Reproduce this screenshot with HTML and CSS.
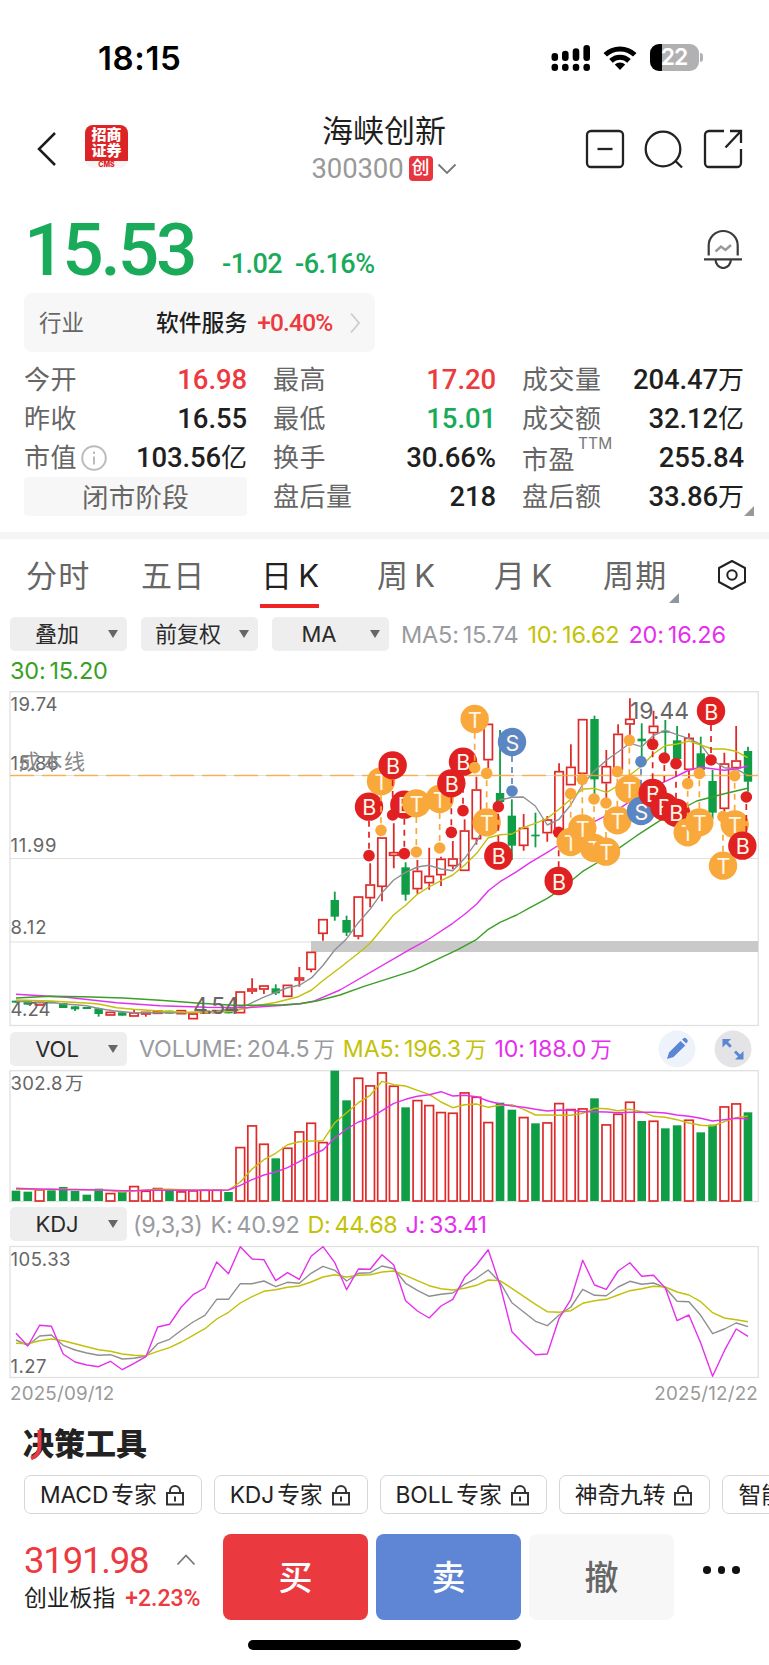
FILE: index.html
```html
<!DOCTYPE html>
<html lang="zh-CN">
<head>
<meta charset="utf-8">
<title>海峡创新 300300</title>
<link rel="stylesheet" href="styles.css">
</head>
<body>
<header class="status">
  <span class="clock">18:15</span>
  <span class="status-icons">
    <svg class="signal" width="40" height="28" viewBox="0 0 40 28"><g stroke="#000" stroke-width="6.6" stroke-linecap="round"><path d="M3.8 12.3v1.4M14.3 10v3.7M25 7.500v6.200M35.700 4.300v9.400M3.800 23v.8M14.300 23v.8M25 23v.8M35.700 23v.8"/></g></svg>
    <svg class="wifi" width="34" height="26" viewBox="0 0 34 26"><g fill="none" stroke="#000" stroke-width="5"><path d="M2.200 9.800a21.500 21.500 0 0 1 29.600 0"/><path d="M8 15.900a13 13 0 0 1 18 0"/></g><path d="M17 25l-5.200-5.400a7.800 7.800 0 0 1 10.400 0z"/></svg>
    <span class="battery"><b>22</b></span><i class="nub"></i>
  </span>
</header>

<nav class="nav">
  <div class="nav-left">
    <svg width="20" height="36" viewBox="0 0 20 36"><path d="M18 2L2 18l16 16" fill="none" stroke="#1c1c1c" stroke-width="2.500"/></svg>
    <div class="logo"><span>招商</span><span>证券</span><em>CMS</em></div>
  </div>
  <div class="nav-title">
    <h1>海峡创新</h1>
    <div class="code"><span>300300</span><b>创</b><svg width="20" height="12" viewBox="0 0 20 12"><path d="M1.500 1.500l8.500 8.500 8.500-8.500" fill="none" stroke="#777" stroke-width="1.800"/></svg></div>
  </div>
  <div class="nav-right">
    <svg width="40" height="40" viewBox="0 0 40 40"><rect x="2" y="2" width="36" height="36" rx="4"/><path d="M12.500 20h15"/></svg>
    <svg width="40" height="40" viewBox="0 0 40 40"><circle cx="19" cy="20" r="17.300"/><path d="M31 31.500l7 7"/></svg>
    <svg width="40" height="40" viewBox="0 0 40 40"><path d="M21 2H6a4 4 0 0 0-4 4v28a4 4 0 0 0 4 4h28a4 4 0 0 0 4-4V20M27 2h11v12M38 2L22.500 18.500"/></svg>
  </div>
</nav>

<section class="quote">
  <div class="price-row">
    <span class="price">15.53</span><span class="chg">-1.02</span><span class="chg pct">-6.16%</span>
    <svg class="bell" width="40" height="40" viewBox="0 0 40 40"><path d="M5.700 26.500V16.500a14.500 14.500 0 0 1 29 0v10M1 30.300h38M12.500 30.500a7.700 8.500 0 0 0 15.400 0" fill="none" stroke="#3c3c3c" stroke-width="2.200"/><path d="M12.500 22.500l5.500-5 4.500 3.500 5.500-5" fill="none" stroke="#999" stroke-width="2.400"/></svg>
  </div>
  <div class="industry"><span class="k">行业</span><span class="n">软件服务</span><span class="p">+0.40%</span>
    <svg width="12" height="22" viewBox="0 0 12 22"><path d="M2 1.500l8 9.500-8 9.500" fill="none" stroke="#ccc" stroke-width="1.800"/></svg></div>
  <div class="stats">
    <div><label>今开</label><b class="up">16.98</b></div>
    <div><label>最高</label><b class="up">17.20</b></div>
    <div><label>成交量</label><b>204.47<i>万</i></b></div>
    <div><label>昨收</label><b>16.55</b></div>
    <div><label>最低</label><b class="down">15.01</b></div>
    <div><label>成交额</label><b>32.12<i>亿</i></b></div>
    <div><label>市值</label><svg class="info" width="26" height="26" viewBox="0 0 26 26"><circle cx="13" cy="13" r="11.800" fill="none" stroke="#bbb" stroke-width="2"/><path d="M13 11.500v8M13 6.500v2.500" stroke="#bbb" stroke-width="2"/></svg><b>103.56<i>亿</i></b></div>
    <div><label>换手</label><b>30.66%</b></div>
    <div><label class="pe">市盈</label><sup>TTM</sup><b>255.84</b></div>
    <div class="phase">闭市阶段</div>
    <div><label>盘后量</label><b>218</b></div>
    <div class="last"><label>盘后额</label><b>33.86<i>万</i></b></div>
  </div>
</section>

<div class="tabs">
  <span class="t1">分时</span><span class="t2">五日</span><span class="t3 on">日<i>K</i></span><span class="t4">周<i>K</i></span><span class="t5">月<i>K</i></span><span class="t6">周期</span>
  <svg class="hex" width="30" height="32" viewBox="0 0 30 32"><path d="M15 2l13 7v14l-13 7-13-7V9z" fill="none" stroke="#222" stroke-width="2" stroke-linejoin="round"/><circle cx="15" cy="16" r="4.700" fill="none" stroke="#222" stroke-width="2"/></svg>
</div>

<div class="tools">
  <button><span>叠加</span></button><button><span>前复权</span></button><button><span>MA</span></button>
  <div class="legend ma"><span class="grey">MA5:<s></s>15.74</span><span class="yellow">10:<s></s>16.62</span><span class="pink">20:<s></s>16.26</span></div>
</div>
<div class="legend second"><span class="green">30:<s></s>15.20</span></div>

<svg id="kline" class="chart" width="769" height="338" viewBox="0 690 769 338"></svg>

<div class="tools vol">
  <button><span>VOL</span></button>
  <div class="legend"><span class="grey">VOLUME:<s></s>204.5<s></s><u>万</u></span><span class="yellow">MA5:<s></s>196.3<s></s><u>万</u></span><span class="pink">10:<s></s>188.0<s></s><u>万</u></span></div>
  <div class="round-btns">
    <svg width="38" height="38" viewBox="0 0 38 38"><circle cx="19" cy="19" r="18.500" fill="#edf2fb"/><path d="M9 29l2-6.500L22.500 11l4.800 4.600L15.500 27zM24 9.500l2-1.500q1-.7 2 .3l1.300 1.400q1 1 .2 2l-1.300 1.900z" fill="#5b86d4"/></svg>
    <svg width="38" height="38" viewBox="0 0 38 38"><circle cx="19" cy="19" r="18.500" fill="#e4e4e6"/><path d="M8.500 9h8.500l-3 3 3.800 3.800-2 2L12 14l-3.500 3.500zM29.500 29.500H21l3-3-4-4 2-2 4 4 3.500-3.500z" fill="#5b86d4"/></svg>
  </div>
</div>

<svg id="volume" class="chart" width="769" height="134" viewBox="0 1069 769 134"></svg>

<div class="tools kdj">
  <button><span>KDJ</span></button>
  <div class="legend"><span class="grey">(9,3,3)</span><span class="grey">K:<s></s>40.92</span><span class="yellow">D:<s></s>44.68</span><span class="pink">J:<s></s>33.41</span></div>
</div>

<svg id="kdjchart" class="chart" width="769" height="134" viewBox="0 1245 769 134"></svg>
<div class="dates"><span>2025/09/12</span><span>2025/12/22</span></div>

<section class="decision">
  <h2>决策工具<svg width="16" height="32" viewBox="0 0 16 32"><path d="M12.500 1v17q0 8-8.500 11.500" fill="none" stroke="#ea3a40" stroke-width="4"/></svg></h2>
  <div class="chips" id="chips">
    <span class="chip">MACD<s></s>专家<svg class="lock" width="20" height="22" viewBox="0 0 20 22"><path d="M2 9h16v11.500H2zM5 9V7a5 5 0 0 1 10 0v2M10 12.500v5" /></svg></span>
    <span class="chip">KDJ<s></s>专家<svg class="lock" width="20" height="22" viewBox="0 0 20 22"><path d="M2 9h16v11.500H2zM5 9V7a5 5 0 0 1 10 0v2M10 12.500v5" /></svg></span>
    <span class="chip">BOLL<s></s>专家<svg class="lock" width="20" height="22" viewBox="0 0 20 22"><path d="M2 9h16v11.500H2zM5 9V7a5 5 0 0 1 10 0v2M10 12.500v5" /></svg></span>
    <span class="chip">神奇九转<svg class="lock" width="20" height="22" viewBox="0 0 20 22"><path d="M2 9h16v11.500H2zM5 9V7a5 5 0 0 1 10 0v2M10 12.500v5" /></svg></span>
    <span class="chip">智能</span>
  </div>
</section>

<footer class="trade">
  <div class="index">
    <div class="index-top"><b>3191.98</b><svg width="20" height="12" viewBox="0 0 20 12"><path d="M1.500 10.500L10 1.500l8.500 9" fill="none" stroke="#777" stroke-width="1.800"/></svg></div>
    <div class="index-sub"><span>创业板指</span><em>+2.23%</em></div>
  </div>
  <div class="act buy">买</div><div class="act sell">卖</div><div class="act cancel">撤</div>
  <div class="dots"><i></i><i></i><i></i></div>
</footer>
<div class="home"></div>
<script src="charts.js"></script>
</body>
</html>
```
FILE: styles.css
```css
* { box-sizing: border-box; }
body { margin: 0; width: 769px; height: 1665px; overflow: hidden; background: #fff; color: #1f1f1f; font-family: Inter, "Noto Sans CJK SC", sans-serif; }
i, em { font-style: normal; }
svg { display: block; flex: none; }

.status { height: 105px; padding: 37px 66px 0 98px; display: flex; justify-content: space-between; }
.clock { font: 600 33px/42px Inter, sans-serif; letter-spacing: 0.600px; color: #000; }
.status-icons { display: flex; align-items: center; height: 41px; }
.wifi { margin-left: 12px; }
.battery { margin-left: 13px; width: 49px; height: 27px; border-radius: 9px; background: linear-gradient(90deg, #000 12px, #b1b1b3 12px); color: #fff; text-align: center; }
.battery b { display: block; font: 600 23px/27px Inter, sans-serif; padding-right: 1px; letter-spacing: -1px; }
.nub { width: 3px; height: 9px; margin-left: 1px; border-radius: 0 4px 4px 0; background: #b1b1b3; }

.nav { height: 95px; padding: 0 26px 0 37px; display: grid; grid-template-columns: 1fr auto 1fr; }
.nav-left { display: flex; gap: 28px; padding-top: 20px; }
.nav-left > svg { margin-top: 6px; }
.logo { width: 43px; height: 43px; border-radius: 8px; background: linear-gradient(#dc2326 36px, #f7f4f4 36px); color: #fff; display: flex; flex-direction: column; align-items: center; font: 900 15px/16px Inter, "Noto Sans CJK SC", sans-serif; padding-top: 2px; }
.logo em { font: 800 7px/9px Inter, sans-serif; color: #dc2326; margin-top: 1px; }
.nav-title { text-align: center; transform: translateX(-6px); }
.nav-title h1 { margin: 6px 0 0; font: 400 31px/40px Inter, "Noto Sans CJK SC", sans-serif; }
.code { height: 35px; display: flex; align-items: center; justify-content: center; color: #999; }
.code span { font: 400 27.500px/34px Roboto, sans-serif; letter-spacing: -0.100px; }
.code b { width: 24px; height: 25px; margin: 0 4px 0 5px; border-radius: 4px; background: #e8353f; color: #fff; font: 500 18px/24px Inter, "Noto Sans CJK SC", sans-serif; }
.nav-right { display: flex; justify-content: flex-end; gap: 19px; padding-top: 24px; }
.nav-right svg { fill: none; stroke: #222; stroke-width: 2.300; }

.quote { height: 332px; padding: 0 25px 0 24px; }
.price-row { height: 93px; display: flex; color: #19ab5a; font-family: Roboto, sans-serif; font-weight: 500; }
.price { width: 198px; font-size: 73px; line-height: 101px; letter-spacing: -3.200px; }
.chg { width: 73px; font-size: 27px; line-height: 129px; letter-spacing: -0.500px; }
.price-row .pct { width: 90px; letter-spacing: -0.500px; }
.bell { margin: 29px 1px 0 auto; }
.industry { width: 351px; height: 59px; padding: 0 14px 0 15px; display: flex; align-items: center; border-radius: 8px; background: #f7f7f7; font-size: 22.500px; line-height: 60px; }
.industry .k { width: 117px; color: #666; }
.industry .n { font-size: 22.800px; font-weight: 500; }
.industry .p { margin-left: 10px; font: 500 24.500px/59px Roboto, sans-serif; letter-spacing: -0.800px; color: #ec3a40; }
.industry svg { margin-left: auto; }
.stats { margin-top: 8px; display: grid; grid-template-columns: 223px 223px 222px; column-gap: 26px; grid-auto-rows: 39px; }
.stats > div { display: flex; line-height: 40px; }
.stats label { font-size: 26px; letter-spacing: 0.500px; color: #666; }
.stats b { margin-left: auto; font: 500 27.500px/40px Roboto, "Noto Sans CJK SC", sans-serif; letter-spacing: -0.100px; }
.stats b i { font-size: 26px; font-weight: 400; }
.stats .info { margin: 7px 0 0 4px; }
.stats .pe { padding-top: 2px; }
.stats sup { align-self: flex-start; margin-top: -3px; padding-left: 3px; font-size: 15.500px; line-height: 17px; letter-spacing: 0.100px; color: #777; }
.stats .phase { justify-content: center; font-size: 26.500px; letter-spacing: 0.300px; border-radius: 4px; background: #f7f7f7; color: #666; }
.up { color: #ec3a40; }
.down { color: #19ab5a; }
.stats .last { position: relative; }
.last::after { content: ""; position: absolute; right: -10px; bottom: 0; border: 5px solid #999; border-top-color: transparent; border-left-color: transparent; }

.tabs { height: 85px; border-top: 7px solid #f5f5f5; padding: 8px 22px 0 26px; display: flex; font-size: 31px; line-height: 58px; letter-spacing: 1.200px; color: #666; }
.tabs i { margin-left: 5px; }
.tabs .t1 { width: 115px; }
.tabs .t2 { width: 120px; }
.tabs .t3 { width: 116px; }
.tabs .t4 { width: 117px; }
.tabs .t5 { width: 109px; }
.tabs .on { position: relative; color: #222; }
.on::after { content: ""; position: absolute; left: -1px; top: 57px; width: 59px; height: 4px; background: #ef2424; }
.tabs .t6 { position: relative; }
.t6::after { content: ""; position: absolute; right: -12px; top: 46px; border: 5px solid #8f959e; border-top-color: transparent; border-left-color: transparent; }
.hex { margin: 12px 0 0 auto; }

.tools { height: 34px; padding-left: 10px; display: flex; align-items: center; }
button { width: 117px; height: 34px; margin: 0 14px 0 0; padding: 0; border: 0; border-radius: 5px; background: #eee; display: flex; align-items: center; font: 400 22px/34px Inter, "Noto Sans CJK SC", sans-serif; color: #2a2a2a; }
button span { width: 94px; flex: none; text-align: center; white-space: nowrap; }
button::after { content: ""; flex: none; box-sizing: content-box; margin-left: 4px; border: 5.500px solid transparent; border-top: 8px solid #666; border-bottom: 0; }
.legend { display: flex; gap: 9px; font-size: 23.500px; line-height: 35px; letter-spacing: -0.200px; white-space: nowrap; }
.legend s { display: inline-block; width: 4px; }
.legend u { text-decoration: none; font-size: 21.500px; }
.legend.ma { margin-left: -2px; }
.second { height: 39px; padding: 2px 0 0 10px; }
.grey { color: #999b9f; }
.yellow { color: #c4c207; }
.pink { color: #e430ee; }
.green { color: #3a9f24; }
.vol { height: 41px; }
.vol .legend { margin-left: -2px; font-size: 23.200px; letter-spacing: -0.150px; gap: 8px; line-height: 36px; }
.kdj .legend { margin-left: -8px; font-size: 23.400px; gap: 8px; letter-spacing: -0.300px; }
.round-btns { margin-left: auto; padding-right: 17px; display: flex; gap: 18px; }
.kdj { height: 42px; }
.chart text { font-family: Inter, "Noto Sans CJK SC", sans-serif; }
.dates { height: 38px; padding: 0 11px 0 10px; display: flex; justify-content: space-between; font-size: 18.800px; line-height: 30px; letter-spacing: 0.200px; color: #999; }

.decision { height: 99px; padding-left: 23px; }
.decision h2 { position: relative; margin: 0; height: 58px; font: 900 31px/54px Inter, "Noto Sans CJK SC", sans-serif; color: #222; }
.decision h2 svg { position: absolute; left: 4px; top: 12px; }
.chips { display: flex; gap: 12px; width: 746px; overflow: hidden; padding-left: 1px; }
.chip { height: 39px; flex: none; padding: 0 16px 0 15px; border: 1.500px solid #d6d6d6; border-radius: 7px; display: flex; align-items: center; font-size: 22.800px; line-height: 37px; letter-spacing: -0.100px; color: #222; }
.chip s { width: 3px; }
.lock { margin-left: 8px; fill: none; stroke: #333; stroke-width: 2; }

.trade { height: 126px; padding: 18px 0 0 24px; display: flex; gap: 8px; }
.index { width: 191px; }
.index-top { height: 54px; display: flex; align-items: center; }
.index-top b { width: 152px; font: 400 36.500px/56px Roboto, sans-serif; letter-spacing: -1.200px; color: #ec3a40; }
.index-top svg { margin-top: -3px; }
.index-sub { font-size: 22.800px; line-height: 19px; white-space: nowrap; }
.index-sub em { margin-left: 10px; font: 500 23px/19px Roboto, sans-serif; color: #ec3a40; }
.act { width: 145px; height: 86px; border-radius: 8px; text-align: center; color: #fff; font: 500 34px/88px Inter, "Noto Sans CJK SC", sans-serif; }
.buy { background: #ea3a40; }
.sell { background: #5f86d4; }
.cancel { background: #f7f7f7; color: #666; }
.dots { display: flex; gap: 7px; padding: 32px 0 0 21px; }
.dots i { width: 7.500px; height: 7.500px; border-radius: 50%; background: #111; }
.home { width: 273px; height: 10px; margin: -2px 0 0 248px; border-radius: 5px; background: #000; }
```
FILE: charts.js
```js
const RED = '#df2a2a', GREEN = '#0f9d46', GRID = '#e0e0e0';
const LINE = { grey: '#8f8f92', yellow: '#c2c00a', pink: '#e430ee', green: '#3a9f24' };
const cx = i => 16 + 11.806 * i;

const rect = (x, y, w, h, a) => `<rect x="${x}" y="${y}" width="${w}" height="${h}" ${a}/>`;
const hline = y => `<path d="M10 ${y}H758" stroke="${GRID}" stroke-width="1.2"/>`;
const poly = (pts, c) => `<polyline points="${pts}" fill="none" stroke="${c}" stroke-width="1.4" stroke-linejoin="round"/>`;
const label = (s, x, y, size, w, c = '#666') => `<text x="${x}" y="${y}" font-size="${size}" fill="${c}" textLength="${w}">${s}</text>`;
const frame = (y, h) => rect(10, y, 748.3, h, `fill="none" stroke="${GRID}" stroke-width="1.3"`);

// Each candle: [colour, body top, body bottom, high, low], vertical thirds of a pixel from y=690
const candles = [
  ['G',932,938],['G',934,944],['R',935,947],['G',934,940],['G',939,954],['G',949,958,949,963],['G',951,957],['G',955,972,953,980],
  ['R',965,977],['G',967,977],['R',967,980,960],['R',965,974,965,980],['R',961,972],['G',962,971],['R',960,973],['R',970,988],
  ['R',962,970],['R',960,970],['G',961,970],['R',904,970],['R',895,905,865,912],['R',886,899,886,912],['G',895,910,883,915],
  ['R',884,921],['R',862,872,831,890],['R',785,840,785,847],['R',687,732,687,752],['G',630,680,605,692],
  ['G',690,728,677,738],['R',619,740,619,748],['R',583,625,520,652],['R',442,591,442,634],['R',486,498,400,535],['G',532,614,517,632],
  ['R',542,598,510,611],['R',557,580,473,599],['R',506,556,500,588],['R',505,529,453,538],['R',421,543,388],['R',298,448,260,464],
  ['R',101,211,101,235],['G',309,336,120],['G',377,467,328,510],['R',413,468,372,482],['G',434,439,368,472],
  ['R',388,430,378,455],['R',243,437,220],['R',230,286,163],['R',87,252],['G',87,268,77,330],['R',228,280,180,330],['R',131,240,103],
  ['R',86,104,25,150],['G',146,154,100,215],['R',107,130,62,160],['G',122,128,90,200],['G',151,207,108,235],['R',143,240,130,280],
  ['G',190,240,140],['G',273,368,240,388],['R',220,357,188,385],['R',211,235,108],['G',183,275,170,305]
];

function drawCandle([c, t, b, hi = t, lo = b], i) {
  const y = v => 690 + v / 3, x = cx(i);
  if (c === 'G') return `<path d="M${x} ${y(hi)}V${y(lo)}" stroke="${GREEN}" stroke-width="1.8"/>` + rect(x - 4.2, y(t), 8.4, y(b) - y(t), `fill="${GREEN}"`);
  return `<path d="M${x} ${y(hi)}V${y(t)}M${x} ${y(b)}V${y(lo)}" stroke="${RED}" stroke-width="1.8"/>` +
    rect(x - 4.2, y(t) + .7, 8.4, Math.max(1.5, y(b) - y(t) - 1.4), `fill="none" stroke="${RED}" stroke-width="1.7"`);
}

// Sections of a moving average, each with its own origin
const join = (...parts) => parts.map(([ox, oy, s]) => s.split(' ').map(p => {
  const [x, y] = p.split(',').map(Number); return (ox + x / 3).toFixed(1) + ',' + (oy + y / 3).toFixed(1);
}).join(' ')).join(' ');
const averages = {
  grey: [[0,870,'48,393 83,396 118,398 153,397 190,402 225,404 260,407 300,416 340,422 400,428 480,428 560,428 650,424 700,415 740,406 790,382 860,354 900,345 935,323 970,285 1004,240'],
    [300,690,'140,746 175,698 210,658 246,608 281,570 317,547 352,531 387,526 423,537 458,542 494,505 530,455 565,380 600,330 636,322 670,321'],
    [530,690,'0,336 16,348 52,405 87,388 122,345 157,285 193,243 230,210 265,185 300,160 335,170 370,137 405,121 441,134 477,146 512,163 547,210 583,233 618,236 653,257']],
  yellow: [[0,870,'48,390 150,393 270,400 300,403 350,413 400,418 480,423 560,427 640,427 700,424 750,411 830,397 895,380 935,360 970,331 1020,293'],
    [300,690,'190,778 210,760 246,717 281,674 317,646 352,613 387,591 423,572 458,555 494,525 530,490 565,443 600,434 636,432 670,413'],
    [530,690,'16,400 52,385 87,358 122,328 157,298 193,295 230,307 265,287 300,255 335,228 370,192 405,167 441,162 477,153 512,165 547,177 583,177 618,184 653,203']],
  pink: [[0,870,'48,373 200,382 350,398 480,407 620,412 740,413 850,406 900,401 940,394 1020,360'],
    [300,690,'330,778 387,747 458,700 494,673 530,642 565,602 600,575 650,545'],
    [530,690,'0,518 52,487 87,465 193,395 265,358 335,310 400,277 441,258 477,240 512,232 547,236 583,241 618,237 653,228']],
  green: [[0,870,'48,384 150,379 250,380 370,384 480,391 600,400 700,406 760,406 850,404 900,401 950,393 1020,375 1090,350 1240,302'],
    [300,690,'475,778 530,748 565,718 600,697 650,675'],
    [530,690,'0,653 52,625 87,602 157,545 215,510 265,476 320,437 400,385 440,365 500,333 583,311 653,295']]
};

// Trade marks: [letter, origin x, x and y of badge, y of dot, x of dot if shifted]
const A = 300, B = 530;
const marks = [
  ['B',A,207,350,497],['T',A,243,274,421],['B',A,278,226,375],['B',A,313,344,491],['T',A,349,340,486],['T',A,419,327,474],
  ['B',A,454,280,427],['B',A,489,215,362],['T',A,524,87,233],['T',A,560,397,250],['B',A,595,497,350],['S',A,636,156,303],
  ['B',B,86,573,427],['T',B,122,456,311],['T',B,157,415,268],['T',B,192,474,327],['T',B,228,485,339],['T',B,262,391,245],
  ['T',B,298,298,151],['S',B,333,363,215],['B',B,368,309,163],['B',B,403,350,204],['B',B,438,368,221],['T',B,473,427,281],
  ['T',B,508,397,250],['B',B,543,63,210],['T',B,579,527,380],['T',B,614,403,257],['B',B,637,467,321,649]
];
const markColor = { B: '#e02021', T: '#f9a93c', S: '#5b86c4' };
function drawMark([s, ox, bx, by, dy, dx = bx]) {
  const x = ox + bx / 3, y = 690 + by / 3, x2 = ox + dx / 3, y2 = 690 + dy / 3, c = markColor[s];
  return `<path d="M${x2} ${y2}V${y}" stroke="${c}" stroke-width="1.7" stroke-dasharray="6 5" stroke-dashoffset="-7"/>` +
    `<circle cx="${x2}" cy="${y2}" r="5.800" fill="${c}"/><circle cx="${x}" cy="${y}" r="14.200" fill="${c}"/>` +
    `<text x="${x + .4}" y="${y + 8.600}" font-size="21.500" fill="#fff6e8" text-anchor="middle">${s}</text>`;
}

document.getElementById('kline').innerHTML =
  frame(691.7, 333.8) + [775.5, 858.5, 942].map(hline).join('') +
  rect(311, 941, 447, 11, 'fill="#c9c9c9"') +
  candles.map(drawCandle).join('') +
  Object.keys(averages).map(k => poly(join(...averages[k]), LINE[k])).join('') +
  '<path d="M10 775.500H758" stroke="#f9a93c" stroke-width="1.500" stroke-dasharray="24 8" opacity=".85"/>' +
  label('19.74', 10.500, 710.500, 18.500, 47) + label('15.86', 10.500, 770, 18.500, 48) + label('成本线', 19, 769, 21, 66, '#888') +
  label('11.99', 10.500, 852, 18.500, 46) + label('8.12', 10.500, 934, 18.500, 36) + label('4.24', 10.500, 1016, 18.500, 40) +
  label('4.54', 193, 1014, 23, 46) + label('19.44', 630, 719, 23, 59) +
  marks.map(drawMark).join('');

const volumes = ('G512 G515 R508 G511 G501 G513 G524 G506 R519 G516 R498 R512 R504 G513 R514 R511 R509 R509 G516 R381 R316 R371 G415 ' +
  'R383 R334 R308 R366 G152 G241 R173 R196 R157 R197 G262 R240 R255 R276 R278 R217 R230 R306 G248 G269 R291 G310 R307 R249 R267 R265 ' +
  'G235 R313 R281 R245 G303 R302 G325 G316 R299 G337 G314 R259 R250 G277').split(' ');
const volMa5 = [508,508,509,508,508,508,509,510,512,516,513,510,508,508,509,510,511,511,510,486,447,419,400,374,365,363,362,308,278,248,226,184,194,198,211,223,246,263,254,252,262,256,254,268,285,285,286,286,280,265,266,272,268,275,289,292,299,309,316,318,305,293,288];
const volMa10 = [505,506,507,508,509,509,509,510,511,512,512,511,511,511,511,511,511,511,510,496,479,465,456,443,425,405,390,354,327,306,294,272,250,238,229,224,215,228,226,230,243,252,258,262,268,273,270,271,275,275,276,278,277,277,277,279,285,289,295,303,299,295,296];
const series = (arr, oy) => arr.map((v, i) => cx(i).toFixed(1) + ',' + (oy + v / 3).toFixed(1)).join(' ');

document.getElementById('volume').innerHTML = frame(1070.7, 130.8) +
  volumes.map((s, i) => {
    const y = 1020 + s.slice(1) / 3, x = cx(i);
    return s[0] === 'G' ? rect(x - 4.3, y, 8.6, 1201 - y, `fill="${GREEN}"`)
      : rect(x - 4.3, y + .6, 8.6, 1200.4 - y, `fill="none" stroke="${RED}" stroke-width="1.700"`);
  }).join('') +
  poly(series(volMa5, 1020), LINE.yellow) + poly(series(volMa10, 1020), LINE.pink) +
  label('302.8', 10.500, 1090, 18.500, 52) + label('万', 65, 1090, 18.500, 18);

const J = [310,348,286,289,372,396,405,410,394,419,400,380,291,283,231,194,174,96,131,50,87,89,152,128,148,79,50,98,179,117,118,74,105,212,243,264,228,208,142,105,59,165,305,341,374,372,265,208,91,165,178,123,98,139,136,174,272,255,339,439,362,297,319];
const K = [330,346,318,315,346,360,369,376,374,387,385,378,341,328,301,276,256,208,208,161,161,153,170,157,160,130,109,121,153,130,128,108,116,160,181,199,193,189,163,145,120,157,218,246,274,287,255,231,178,196,197,171,154,163,159,173,214,215,256,311,297,279,290];
const D = [340,341,332,327,332,341,350,359,364,372,376,377,364,353,336,316,296,267,247,219,200,184,179,172,168,156,141,134,141,136,134,126,123,136,152,167,176,180,175,166,150,152,175,199,223,245,247,242,220,212,208,195,182,176,169,171,186,195,215,248,264,269,275];
document.getElementById('kdjchart').innerHTML = frame(1246.5, 131) +
  poly(series(K, 1230), LINE.grey) + poly(series(D, 1230), LINE.yellow) + poly(series(J, 1230), LINE.pink) +
  label('105.33', 10.500, 1265.500, 18.500, 60) + label('1.27', 10.500, 1373, 18.500, 36);
```
